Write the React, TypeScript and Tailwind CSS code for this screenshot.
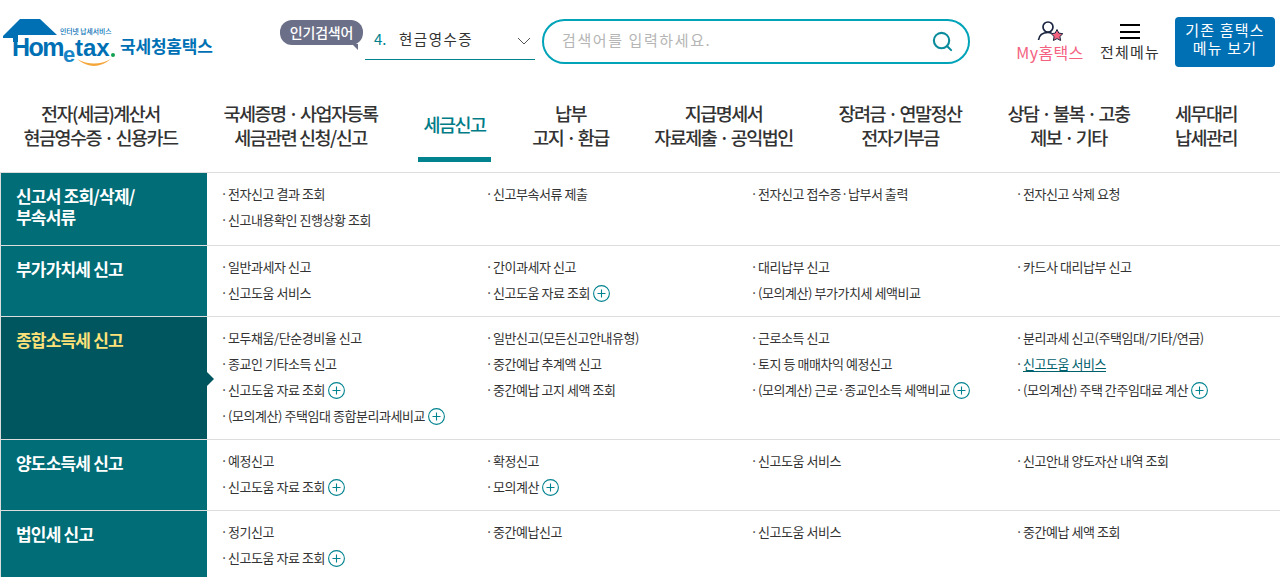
import { Search } from "lucide-react";

const FONT = { fontFamily: '"Noto Sans CJK KR", "Noto Sans", sans-serif' };

const navItems = [
  { w: "w-[155px]", lines: ["전자(세금)계산서", "현금영수증 · 신용카드"] },
  { w: "w-[155px]", lines: ["국세증명 · 사업자등록", "세금관련 신청/신고"] },
  { w: "w-[73px] -ml-[5px] -mr-[4px]", lines: ["세금신고"], active: true },
  { w: "w-[77px]", lines: ["납부", "고지 · 환급"] },
  { w: "w-[139px]", lines: ["지급명세서", "자료제출 · 공익법인"] },
  { w: "w-[124px]", lines: ["장려금 · 연말정산", "전자기부금"] },
  { w: "w-[123px]", lines: ["상담 · 불복 · 고충", "제보 · 기타"] },
  { w: "w-[62px]", lines: ["세무대리", "납세관리"] },
];

type Item = { t: string; plus?: boolean; link?: boolean };

const rows: { title: string[]; active?: boolean; items: Item[]; h: string }[] = [
  {
    title: ["신고서 조회/삭제/", "부속서류"],
    h: "h-[73px]",
    items: [
      { t: "전자신고 결과 조회" },
      { t: "신고부속서류 제출" },
      { t: "전자신고 접수증·납부서 출력" },
      { t: "전자신고 삭제 요청" },
      { t: "신고내용확인 진행상황 조회" },
    ],
  },
  {
    title: ["부가가치세 신고"],
    h: "h-[71px]",
    items: [
      { t: "일반과세자 신고" },
      { t: "간이과세자 신고" },
      { t: "대리납부 신고" },
      { t: "카드사 대리납부 신고" },
      { t: "신고도움 서비스" },
      { t: "신고도움 자료 조회", plus: true },
      { t: "(모의계산) 부가가치세 세액비교" },
    ],
  },
  {
    title: ["종합소득세 신고"],
    active: true,
    h: "h-[123px]",
    items: [
      { t: "모두채움/단순경비율 신고" },
      { t: "일반신고(모든신고안내유형)" },
      { t: "근로소득 신고" },
      { t: "분리과세 신고(주택임대/기타/연금)" },
      { t: "종교인 기타소득 신고" },
      { t: "중간예납 추계액 신고" },
      { t: "토지 등 매매차익 예정신고" },
      { t: "신고도움 서비스", link: true },
      { t: "신고도움 자료 조회", plus: true },
      { t: "중간예납 고지 세액 조회" },
      { t: "(모의계산) 근로·종교인소득 세액비교", plus: true },
      { t: "(모의계산) 주택 간주임대료 계산", plus: true },
      { t: "(모의계산) 주택임대 종합분리과세비교", plus: true },
    ],
  },
  {
    title: ["양도소득세 신고"],
    h: "h-[71px]",
    items: [
      { t: "예정신고" },
      { t: "확정신고" },
      { t: "신고도움 서비스" },
      { t: "신고안내 양도자산 내역 조회" },
      { t: "신고도움 자료 조회", plus: true },
      { t: "모의계산", plus: true },
    ],
  },
  {
    title: ["법인세 신고"],
    h: "h-[71px]",
    items: [
      { t: "정기신고" },
      { t: "중간예납신고" },
      { t: "신고도움 서비스" },
      { t: "중간예납 세액 조회" },
      { t: "신고도움 자료 조회", plus: true },
    ],
  },
];

const PlusIcon = () => (
  <svg width="17" height="17" viewBox="0 0 17 17" className="ml-[3px] shrink-0">
    <circle cx="8.500" cy="8.500" r="7.900" fill="white" stroke="#00838f" strokeWidth="1.100" />
    <path d="M4.500 8.500h8M8.500 4.500v8" stroke="#00838f" strokeWidth="1.100" />
  </svg>
);

const Logo = () => (
  <svg width="214" height="52" viewBox="0 0 214 52">
    <path d="M1 18 L18 1 H38 L55 17 H16 V24 H11 V20 H1 Z" fill="#0070b5" />
    <text x="58" y="16" fontSize="6.800" fill="#0070b5" fontWeight="500">인터넷 납세서비스</text>
    <g fontFamily='"Liberation Sans", sans-serif' fontWeight="700" fill="#0070b5">
      <text x="10" y="38" fontSize="25" letterSpacing="-1.500">Hom</text>
      <text x="61" y="44" fontSize="22" fill="#1a86c7">e</text>
      <text x="73" y="38" fontSize="24">tax</text>
    </g>
    <circle cx="111" cy="37" r="2" fill="#12a150" />
    <path d="M75 41 Q92 55 109 41 Q92 50 75 41 Z" fill="#f5a63b" />
    <text x="118" y="35" fontSize="17" fontWeight="700" fill="#0070b5" letterSpacing="-0.200">국세청홈택스</text>
  </svg>
);

export default function App() {
  return (
    <div className="w-[1280px] h-[577px] overflow-hidden bg-white" style={FONT}>
      <header className="h-[88px] flex items-start">
        <div className="ml-[2px] mt-[18px]">
          <Logo />
        </div>
        <div className="relative ml-[64px] mt-[20px] h-[25px] w-[83px] rounded-[12px] bg-[#6b6f87] text-white text-[14px] font-medium flex items-center justify-center tracking-[-0.2px]">
          인기검색어
          <span className="absolute right-[5px] -bottom-[5px] w-0 h-0 border-l-[6px] border-l-transparent border-t-[6px] border-t-[#6b6f87]" />
        </div>
        <div className="ml-[2px] mt-[19px] w-[170px] h-[41px] border-b border-[#00838f] flex items-center pl-[9px] pr-[4px] text-[15px] text-[#333]">
          <span className="text-[#00838f] w-[25px]">4.</span>
          <span className="text-[14.500px] tracking-[1.500px]">현금영수증</span>
          <svg width="14" height="8" viewBox="0 0 14 8" className="ml-auto mt-[3px]">
            <path d="M1 1l6 6 6-6" fill="none" stroke="#555" strokeWidth="1" />
          </svg>
        </div>
        <div className="ml-[7px] mt-[19px] w-[428px] h-[45px] rounded-full border-2 border-[#00a3b8] flex items-center pl-[18px] pr-[14px]">
          <span className="text-[15px] text-[#b5b5b5] tracking-[1.600px] -mt-[2px]">검색어를 입력하세요.</span>
          <Search size={23} strokeWidth={2.2} className="ml-auto text-[#0b8c9c]" />
        </div>
        <div className="ml-[46px] mt-[21px] w-[68px] flex flex-col items-center">
          <svg width="26" height="21" viewBox="0 0 26 21">
            <circle cx="11" cy="6" r="5" fill="none" stroke="#1b2540" strokeWidth="1.700" />
            <path d="M1.500 19c.7-5 4-7.500 9.500-7.500 1.500 0 2.500.2 3.500.6" fill="none" stroke="#1b2540" strokeWidth="1.700" />
            <path d="M20 8.500l1.800 3.600 4 .6-2.900 2.800.7 4-3.600-1.900-3.600 1.900.7-4-2.900-2.800 4-.6z" fill="#f4627f" stroke="#1b2540" strokeWidth="1" />
          </svg>
          <span className="text-[16px] leading-[22px] -mt-[1px] text-[#f4627f] tracking-[0.4px] whitespace-nowrap">My홈택스</span>
        </div>
        <div className="ml-[16px] mt-[24px] w-[60px] flex flex-col items-center">
          <div className="w-[20px] h-[15px] flex flex-col justify-between">
            <span className="h-[2px] bg-black" />
            <span className="h-[2px] bg-black" />
            <span className="h-[2px] bg-black" />
          </div>
          <span className="text-[15px] leading-[22px] mt-[2px] text-[#333] whitespace-nowrap tracking-[1.200px]">전체메뉴</span>
        </div>
        <div className="ml-[15px] mt-[17px] w-[100px] h-[50px] rounded-[4px] bg-[#0070b5] text-white text-[15px] leading-[18px] tracking-[1.200px] flex flex-col items-center justify-center pb-[7px]">
          <span>기존 홈택스</span>
          <span>메뉴 보기</span>
        </div>
      </header>

      <nav className="h-[84px] flex gap-[45px] pl-[23px] text-[#333] text-[18.500px] font-medium leading-[24px] tracking-[-1.500px]">
        {navItems.map((n) => (
          <div
            key={n.lines[0]}
            className={`${n.w} shrink-0 h-[74px] flex flex-col items-center whitespace-nowrap ${n.active ? "text-[#007c87] border-b-[5px] border-[#00838f] justify-center pt-[3px]" : "pt-[13px]"}`}
          >
            {n.lines.map((l) => (
              <span key={l}>{l}</span>
            ))}
          </div>
        ))}
      </nav>

      <div className="border-t border-[#ddd]">
        {rows.map((r) => (
          <div key={r.title[0]} className={`flex border-b border-[#ddd] ${r.h}`}>
            <div
              className={`relative w-[207px] shrink-0 border-l border-[#ddd] pl-[15px] pt-[12px] text-[17px] font-bold leading-[21px] tracking-[-0.8px] ${r.active ? "bg-[#00565f] text-[#fde27a]" : "bg-[#006d77] text-white"}`}
            >
              {r.title.map((l) => (
                <div key={l}>{l}</div>
              ))}
              {r.active && (
                <span className="absolute -right-[7px] top-[55px] w-0 h-0 border-y-[7px] border-y-transparent border-l-[7px] border-l-[#00565f]" />
              )}
            </div>
            <div className="grid grid-cols-[repeat(4,265px)] grid-rows-[repeat(auto-fill,26px)] flex-1 pl-[15px] pt-[8px] text-[13px] text-[#333] leading-[26px] tracking-[-0.45px] bg-white">
              {r.items.map((it) => (
                <div key={it.t} className="flex items-center whitespace-nowrap h-[26px]">
                  <span className="w-[8px] -ml-[2px] shrink-0 text-center">·</span>
                  <span className={it.link ? "text-[#00606c] underline underline-offset-2" : ""}>{it.t}</span>
                  {it.plus && <PlusIcon />}
                </div>
              ))}
            </div>
          </div>
        ))}
      </div>
    </div>
  );
}
